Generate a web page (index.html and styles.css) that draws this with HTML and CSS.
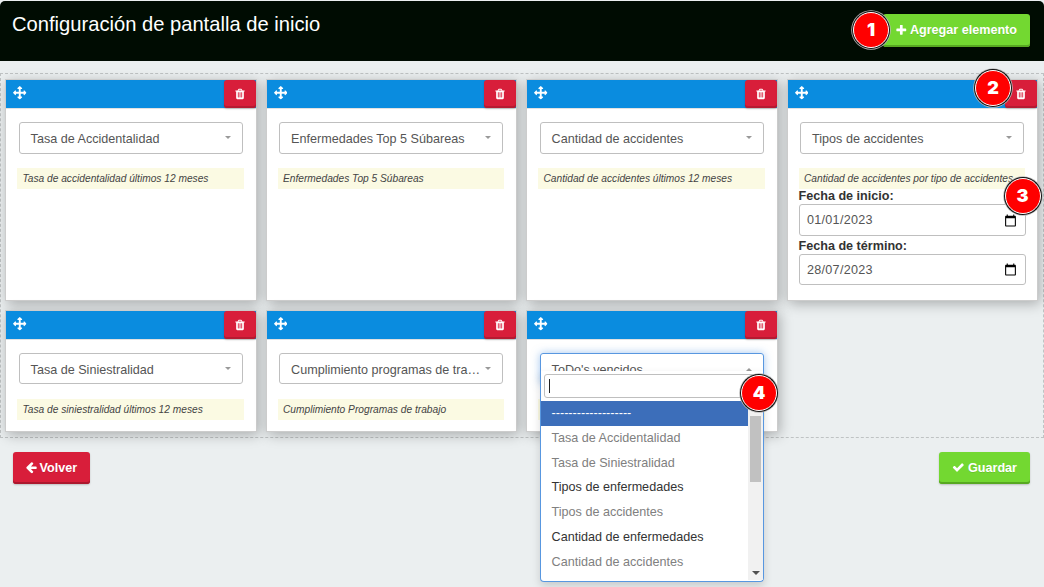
FILE: index.html
```html
<!DOCTYPE html>
<html lang="es">
<head>
<meta charset="utf-8">
<title>Configuración de pantalla de inicio</title>
<link rel="stylesheet" href="styles.css">
</head>
<body>
<svg class="sprite" aria-hidden="true">
  <symbol id="move" viewBox="0 0 1792 1792"><path d="M1792 896q0 26-19 45l-256 256q-19 19-45 19t-45-19-19-45v-128h-384v384h128q26 0 45 19t19 45-19 45l-256 256q-19 19-45 19t-45-19l-256-256q-19-19-19-45t19-45 45-19h128v-384h-384v128q0 26-19 45t-45 19-45-19l-256-256q-19-19-19-45t19-45l256-256q19-19 45-19t45 19 19 45v128h384v-384h-128q-26 0-45-19t-19-45 19-45l256-256q19-19 45-19t45 19l256 256q19 19 19 45t-19 45-45 19h-128v384h384v-128q0-26 19-45t45-19 45 19l256 256q19 19 19 45z"/></symbol>
  <symbol id="trash" viewBox="0 0 1792 1792"><path d="M704 1376v-704q0-14-9-23t-23-9h-64q-14 0-23 9t-9 23v704q0 14 9 23t23 9h64q14 0 23-9t9-23zm256 0v-704q0-14-9-23t-23-9h-64q-14 0-23 9t-9 23v704q0 14 9 23t23 9h64q14 0 23-9t9-23zm256 0v-704q0-14-9-23t-23-9h-64q-14 0-23 9t-9 23v704q0 14 9 23t23 9h64q14 0 23-9t9-23zm-544-992h448l-48-117q-7-9-17-11h-317q-10 2-17 11zm928 32v64q0 14-9 23t-23 9h-96v948q0 83-47 143.500t-113 60.500h-832q-66 0-113-58.500t-47-141.500v-952h-96q-14 0-23-9t-9-23v-64q0-14 9-23t23-9h309l70-167q15-37 54-63t79-26h320q40 0 79 26t54 63l70 167h309q14 0 23 9t9 23z"/></symbol>
  <symbol id="plus" viewBox="0 0 1792 1792"><path d="M1600 736v192q0 40-28 68t-68 28h-416v416q0 40-28 68t-68 28h-192q-40 0-68-28t-28-68v-416h-416q-40 0-68-28t-28-68v-192q0-40 28-68t68-28h416v-416q0-40 28-68t68-28h192q40 0 68 28t28 68v416h416q40 0 68 28t28 68z"/></symbol>
  <symbol id="check" viewBox="0 0 1792 1792"><path d="M1671 566q0 40-28 68l-724 724-136 136q-28 28-68 28t-68-28l-136-136-362-362q-28-28-28-68t28-68l136-136q28-28 68-28t68 28l294 295 656-657q28-28 68-28t68 28l136 136q28 28 28 68z"/></symbol>
  <symbol id="back" viewBox="0 0 1792 1792"><path d="M1664 896v128q0 53-32.500 90.500t-84.500 37.500h-704l293 294q38 36 38 90t-38 90l-75 76q-37 37-90 37-52 0-91-37l-651-652q-37-37-37-90 0-52 37-91l651-650q38-38 91-38 52 0 90 38l75 74q38 38 38 91t-38 91l-293 293h704q52 0 84.500 37.500t32.500 90.500z"/></symbol>
  <symbol id="calendar" viewBox="0 0 24 24"><path d="M20 3h-1V1h-2v2H7V1H5v2H4c-1.100 0-2 .9-2 2v16c0 1.100.9 2 2 2h16c1.100 0 2-.9 2-2V5c0-1.100-.9-2-2-2zm0 18H4V8h16v13z"/></symbol>
</svg>

<header class="topbar">
  <h1 class="title">Configuración de pantalla de inicio</h1>
  <div class="anchor">
    <button class="btn btn-green btn-add"><svg class="icon icon-plus"><use href="#plus"/></svg>Agregar elemento</button>
    <span class="badge badge-1">1</span>
  </div>
</header>

<main class="board">
  <section class="card">
    <div class="card-head"><svg class="grip"><use href="#move"/></svg><button class="delete"><svg class="bin"><use href="#trash"/></svg></button></div>
    <div class="card-body">
      <div class="select"><span class="value">Tasa de Accidentalidad</span><i class="caret"></i></div>
      <p class="note">Tasa de accidentalidad últimos 12 meses</p>
    </div>
  </section>
  <section class="card">
    <div class="card-head"><svg class="grip"><use href="#move"/></svg><button class="delete"><svg class="bin"><use href="#trash"/></svg></button></div>
    <div class="card-body">
      <div class="select"><span class="value">Enfermedades Top 5 Súbareas</span><i class="caret"></i></div>
      <p class="note">Enfermedades Top 5 Súbareas</p>
    </div>
  </section>
  <section class="card">
    <div class="card-head"><svg class="grip"><use href="#move"/></svg><button class="delete"><svg class="bin"><use href="#trash"/></svg></button></div>
    <div class="card-body">
      <div class="select"><span class="value">Cantidad de accidentes</span><i class="caret"></i></div>
      <p class="note">Cantidad de accidentes últimos 12 meses</p>
    </div>
  </section>
  <section class="card">
    <div class="card-head"><svg class="grip"><use href="#move"/></svg><button class="delete"><svg class="bin"><use href="#trash"/></svg></button></div>
    <div class="card-body">
      <div class="select"><span class="value">Tipos de accidentes</span><i class="caret"></i></div>
      <p class="note">Cantidad de accidentes por tipo de accidentes</p>
      <div class="dates">
        <span class="label">Fecha de inicio:</span>
        <div class="date">01/01/2023<svg class="cal"><use href="#calendar"/></svg></div>
        <span class="label">Fecha de término:</span>
        <div class="date date-end">28/07/2023<svg class="cal"><use href="#calendar"/></svg></div>
      </div>
    </div>
    <span class="badge badge-2">2</span>
    <span class="badge badge-3">3</span>
  </section>
  <section class="card card-short">
    <div class="card-head"><svg class="grip"><use href="#move"/></svg><button class="delete"><svg class="bin"><use href="#trash"/></svg></button></div>
    <div class="card-body">
      <div class="select"><span class="value">Tasa de Siniestralidad</span><i class="caret"></i></div>
      <p class="note">Tasa de siniestralidad últimos 12 meses</p>
    </div>
  </section>
  <section class="card card-short">
    <div class="card-head"><svg class="grip"><use href="#move"/></svg><button class="delete"><svg class="bin"><use href="#trash"/></svg></button></div>
    <div class="card-body">
      <div class="select"><span class="value">Cumplimiento programas de tra…</span><i class="caret"></i></div>
      <p class="note">Cumplimiento Programas de trabajo</p>
    </div>
  </section>
  <section class="card card-short">
    <div class="card-head"><svg class="grip"><use href="#move"/></svg><button class="delete"><svg class="bin"><use href="#trash"/></svg></button></div>
    <div class="card-body">
      <div class="select select-open"><span class="value">ToDo's vencidos</span><i class="caret caret-up"></i></div>
      <p class="note">&nbsp;</p>
    </div>
    <div class="dropdown">
      <div class="search"><i class="cursor"></i></div>
      <div class="results">
        <ul class="options">
          <li class="option active">-------------------</li>
          <li class="option off">Tasa de Accidentalidad</li>
          <li class="option off">Tasa de Siniestralidad</li>
          <li class="option">Tipos de enfermedades</li>
          <li class="option off">Tipos de accidentes</li>
          <li class="option">Cantidad de enfermedades</li>
          <li class="option off">Cantidad de accidentes</li>
        </ul>
        <div class="scrollbar"><i class="thumb"></i><i class="down"></i></div>
      </div>
    </div>
    <span class="badge badge-4">4</span>
  </section>
</main>

<footer class="actions">
  <button class="btn btn-red"><svg class="icon"><use href="#back"/></svg>Volver</button>
  <button class="btn btn-green btn-save"><svg class="icon"><use href="#check"/></svg>Guardar</button>
</footer>
</body>
</html>
```

FILE: styles.css
```css
* { box-sizing: border-box; }
html { height: 100%; overflow: hidden; }
body {
  margin: 0;
  padding-top: 1px;
  height: 100%;
  overflow: hidden;
  background: #ebeff0;
  font: 12.600px/18px "Liberation Sans", Arial, sans-serif;
  color: #555;
}
.sprite { display: none; }
svg { fill: currentColor; flex: none; }

.topbar {
  display: flex;
  justify-content: space-between;
  height: 60px;
  padding: 13px 14px 0 12px;
  background: #000c02;
  border-radius: 5px 5px 0 0;
}
.title { margin: -2px 0 0; font-size: 20.160px; line-height: 24px; font-weight: 400; color: #fff; }
.anchor { position: relative; }

.btn {
  display: flex;
  align-items: center;
  gap: 2px;
  height: 32px;
  padding: 0 12.500px 1px 12px;
  border: 0;
  border-radius: 3px;
  color: #fff;
  font: bold 12.600px/18px "Liberation Sans", Arial, sans-serif;
  text-shadow: 0 1px 0 rgba(0, 0, 0, .1);
}
.btn-add { height: 33px; padding-right: 13px; }
.btn-save { gap: 3px; padding: 0 13px 1px; }
.icon { width: 12.600px; height: 12.600px; }
.btn-green { background: #73d831; box-shadow: inset 0 -2px 0 #57a821, 0 1px 2px rgba(0, 0, 0, .2); }
.btn-red { background: #d81e3a; box-shadow: inset 0 -2px 0 #ac182e, 0 1px 2px rgba(0, 0, 0, .2); }

.board {
  display: grid;
  grid-template-columns: repeat(4, 1fr);
  gap: 9px;
  margin-top: 12px;
  padding: 5px 5px 5px 4px;
  height: 365px;
  grid-template-rows: 222px 122px;
  border: 1px dashed #bfc3c4;
}
.card {
  position: relative;
  min-width: 0;
  background: #fff;
  border: 1px solid #ccc;
  box-shadow: 2px 3px 12px rgba(0, 0, 0, .28);
}
.card-head {
  display: flex;
  justify-content: space-between;
  height: 29px;
  padding-left: 7px;
  background: #0a8cdf;
  border-bottom: 1px solid #e2e2e2;
}
.grip { width: 13.500px; height: 13.500px; margin-top: 6px; color: #fff; }
.delete {
  display: flex;
  justify-content: center;
  width: 32px;
  height: 28px;
  padding: 8px 0 0;
  border: 0;
  border-radius: 3px;
  background: #d81e3a;
  box-shadow: inset 0 -2px 0 #b61a31, 0 1px 2px rgba(0, 0, 0, .2);
  color: #fff;
}
.bin { width: 12px; height: 12px; }
.card-body { padding: 13px 12px 0 11px; }

.select {
  display: flex;
  align-items: center;
  justify-content: space-between;
  height: 32px;
  margin: 0 1px 14px 1.600px;
  padding: 1px 11px 0 11px;
  border: 1px solid #bfbfbf;
  border-radius: 3px;
}
.card-short .select { height: 31px; margin-bottom: 15px; padding-top: 2px; }
.card .select-open {
  align-items: flex-start;
  padding-top: 7px;
  border-color: #5897e0;
  box-shadow: 0 0 8px rgba(88, 151, 224, .55);
}
.value { white-space: nowrap; }
.caret { flex: none; margin: -2px 0 0 4px; border: 3px solid transparent; border-top-color: #999; border-bottom: 0; }
.caret-up { margin-top: 7px; border-bottom: 3px solid #999; border-top: 0; }
.note {
  height: 21px;
  margin: 0;
  padding-left: 5.500px;
  overflow: hidden;
  background: #fbfae3;
  color: #444;
  font-size: 10.200px;
  font-style: italic;
  line-height: 21px;
  white-space: nowrap;
}

.dates { margin-right: -.5px; }
.label { display: block; height: 15px; line-height: 14px; font-weight: 700; color: #333; }
.date {
  display: flex;
  align-items: center;
  justify-content: space-between;
  height: 32px;
  margin-bottom: 3px;
  padding: 0 8px 0 7.400px;
  border: 1px solid #bfbfbf;
  border-radius: 3px;
  letter-spacing: .3px;
}
.date-end { height: 31px; }
.cal { width: 13px; height: 13px; color: #000; }

.dropdown {
  position: absolute;
  z-index: 2;
  top: 60px;
  left: 13px;
  width: 224px;
  height: 211px;
  padding: 3px 0 0;
  background: #fff;
  border: 1px solid #5897e0;
  border-top: 0;
  border-radius: 0 0 4px 4px;
  box-shadow: 0 4px 8px rgba(0, 0, 0, .15);
}
.search {
  display: flex;
  align-items: center;
  height: 24px;
  margin: 0 3px 3px;
  padding-left: 4px;
  border: 1px solid #bfbfbf;
  border-radius: 3px;
}
.cursor { width: 1px; height: 14px; background: #222; }
.results { display: flex; height: 179px; }
.options { flex: 1; margin: 0; padding: 0; list-style: none; overflow: hidden; }
.option { height: 24.800px; padding-left: 10.600px; line-height: 24.500px; color: #333; }
.off { color: #808080; }
.active { background: #3c6eba; color: #fff; }
.scrollbar {
  display: flex;
  flex-direction: column;
  align-items: center;
  justify-content: space-between;
  width: 15px;
  padding: 15px 0 5px;
  background: #f1f1f1;
}
.thumb { width: 11px; height: 66px; background: #c1c1c1; }
.down { border: 4px solid transparent; border-top-color: #505050; border-bottom: 0; }

.badge {
  position: absolute;
  z-index: 3;
  display: flex;
  align-items: center;
  justify-content: center;
  width: 36px;
  height: 36px;
  border: 1px solid #fff;
  border-radius: 50%;
  background: #f00;
  box-shadow: 0 0 0 1px #111, 0 0 0 1.800px #bbb;
  color: #fff;
  font: 900 18px/1 Inter, "Open Sans", sans-serif;
}
.badge-1 { right: 141px; top: -2px; }
.badge-2 { left: 187.500px; top: -10px; }
.badge-3 { left: 217px; top: 98px; }
.badge-4 { left: 214px; top: 64px; }

.actions { display: flex; justify-content: space-between; padding: 14px 14px 0 13px; }
```
